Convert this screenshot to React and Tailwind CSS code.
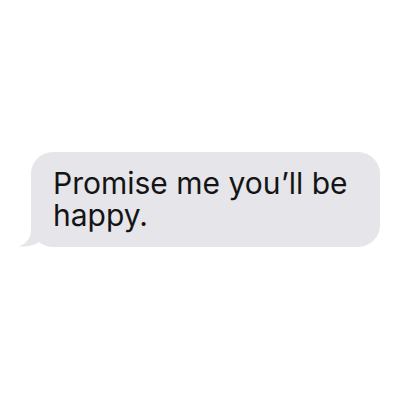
export default function App() {
  return (
    <div className="w-[400px] h-[400px] bg-white overflow-hidden">
      <div className="relative ml-[31px] mt-[152px] w-[349px] h-[95px] rounded-[22px] bg-[#e5e5ea]">
        <svg className="absolute left-[-14px] bottom-0" width="40" height="40" viewBox="0 0 40 40">
          <path d="M14 0 L14 22 C14 31 10 36 2 39.3 C10 40.2 17 38.5 22 35 C27 38.5 32 40 40 40 L40 0 Z" fill="#e5e5ea" />
        </svg>
        <div
          className="relative pl-[22px] pt-[15px] pr-[20px] text-[30px] leading-[32px] text-[#141414]"
          style={{ fontFamily: "Inter, 'Noto Sans', sans-serif" }}
        >
          Promise me you’ll be happy.
        </div>
      </div>
    </div>
  );
}
